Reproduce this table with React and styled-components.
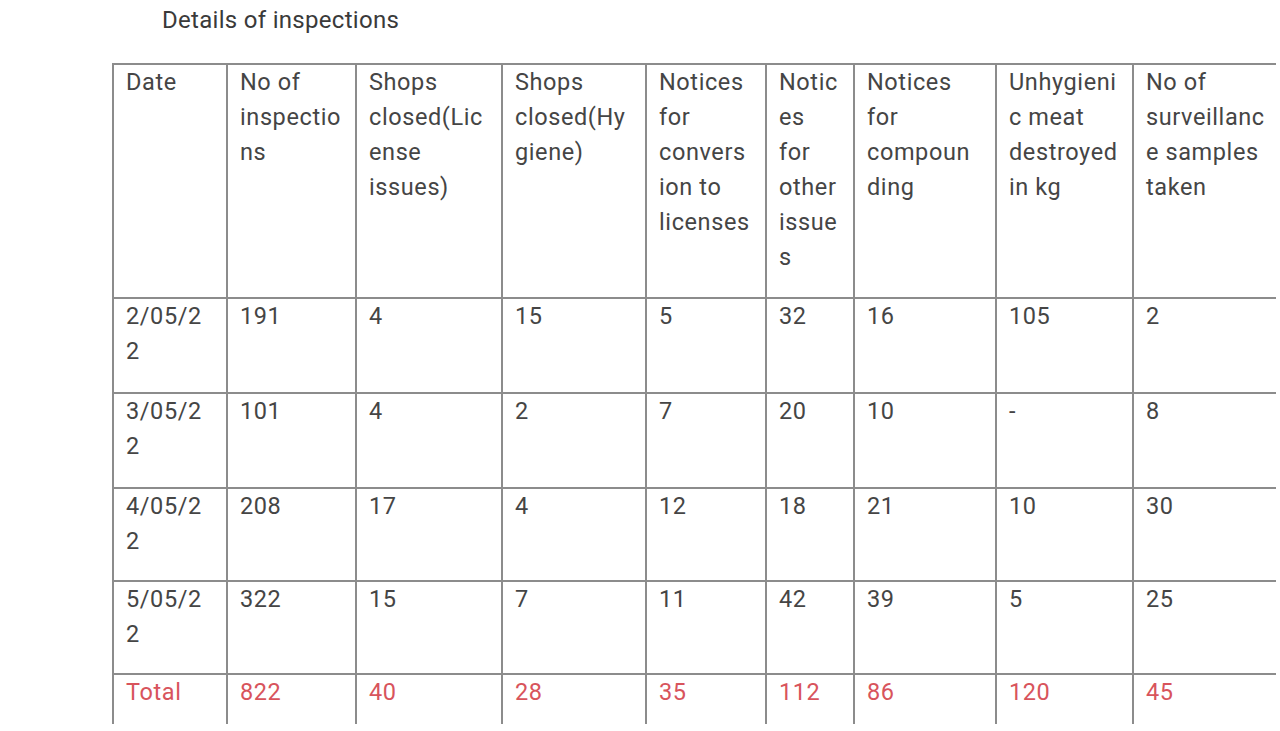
import React from "react";
import styled, { createGlobalStyle } from "styled-components";

const GlobalStyle = createGlobalStyle`
  html, body {
    margin: 0;
    padding: 0;
    background: #ffffff;
    overflow: hidden;
  }
  body {
    font-family: Roboto, "Liberation Sans", Arial, sans-serif;
    color: #444;
  }
`;

const Page = styled.div`
  width: 1280px;
  height: 731px;
  padding-left: 112px;
  box-sizing: border-box;
`;

const Heading = styled.div`
  font-size: 24px;
  line-height: 28px;
  letter-spacing: 0.3px;
  color: #3a3a3a;
  padding: 6px 0 0 50px;
  height: 63px;
  box-sizing: border-box;
`;

const Table = styled.table`
  border-collapse: collapse;
  table-layout: fixed;
  width: 1163px;
  font-size: 23.5px;
  letter-spacing: 0.6px;
  line-height: 35px;
`;

const HeadRow = styled.tr`
  height: 234px;
`;

const BodyRow = styled.tr`
  height: ${({ h }) => h}px;
`;

const Cell = styled.td`
  vertical-align: top;
  padding: 0 0 0 12px;
  border: 2px solid #8c8c8c;
  color: ${({ red }) => (red ? "#d8545c" : "#454545")};
  white-space: nowrap;
  overflow: hidden;
  &:last-child { border-right: none; }
`;

const TotalCell = styled(Cell)`
  border-bottom: none;
`;

const cols = [114, 129, 146, 144, 120, 88, 142, 137, 143];

const headers = [
  ["Date"],
  ["No of", "inspectio", "ns"],
  ["Shops", "closed(Lic", "ense", "issues)"],
  ["Shops", "closed(Hy", "giene)"],
  ["Notices", "for", "convers", "ion to", "licenses"],
  ["Notic", "es", "for", "other", "issue", "s"],
  ["Notices", "for", "compoun", "ding"],
  ["Unhygieni", "c meat", "destroyed", "in kg"],
  ["No of", "surveillanc", "e samples", "taken"],
];

const rows = [
  { h: 95, cells: [["2/05/2", "2"], "191", "4", "15", "5", "32", "16", "105", "2"] },
  { h: 95, cells: [["3/05/2", "2"], "101", "4", "2", "7", "20", "10", "-", "8"] },
  { h: 93, cells: [["4/05/2", "2"], "208", "17", "4", "12", "18", "21", "10", "30"] },
  { h: 93, cells: [["5/05/2", "2"], "322", "15", "7", "11", "42", "39", "5", "25"] },
];

const totals = ["Total", "822", "40", "28", "35", "112", "86", "120", "45"];

const Lines = ({ lines }) =>
  lines.map((l, i) => (
    <React.Fragment key={i}>
      {i > 0 && <br />}
      {l}
    </React.Fragment>
  ));

export default function App() {
  return (
    <>
      <GlobalStyle />
      <Page>
        <Heading>Details of inspections</Heading>
        <Table>
          <colgroup>
            {cols.map((w, i) => (
              <col key={i} style={{ width: w }} />
            ))}
          </colgroup>
          <tbody>
            <HeadRow>
              {headers.map((h, i) => (
                <Cell key={i}>
                  <Lines lines={h} />
                </Cell>
              ))}
            </HeadRow>
            {rows.map((r, ri) => (
              <BodyRow key={ri} h={r.h}>
                {r.cells.map((c, ci) => (
                  <Cell key={ci}>
                    {Array.isArray(c) ? <Lines lines={c} /> : c}
                  </Cell>
                ))}
              </BodyRow>
            ))}
            <BodyRow h={50}>
              {totals.map((t, i) => (
                <TotalCell key={i} red>
                  {t}
                </TotalCell>
              ))}
            </BodyRow>
          </tbody>
        </Table>
      </Page>
    </>
  );
}
